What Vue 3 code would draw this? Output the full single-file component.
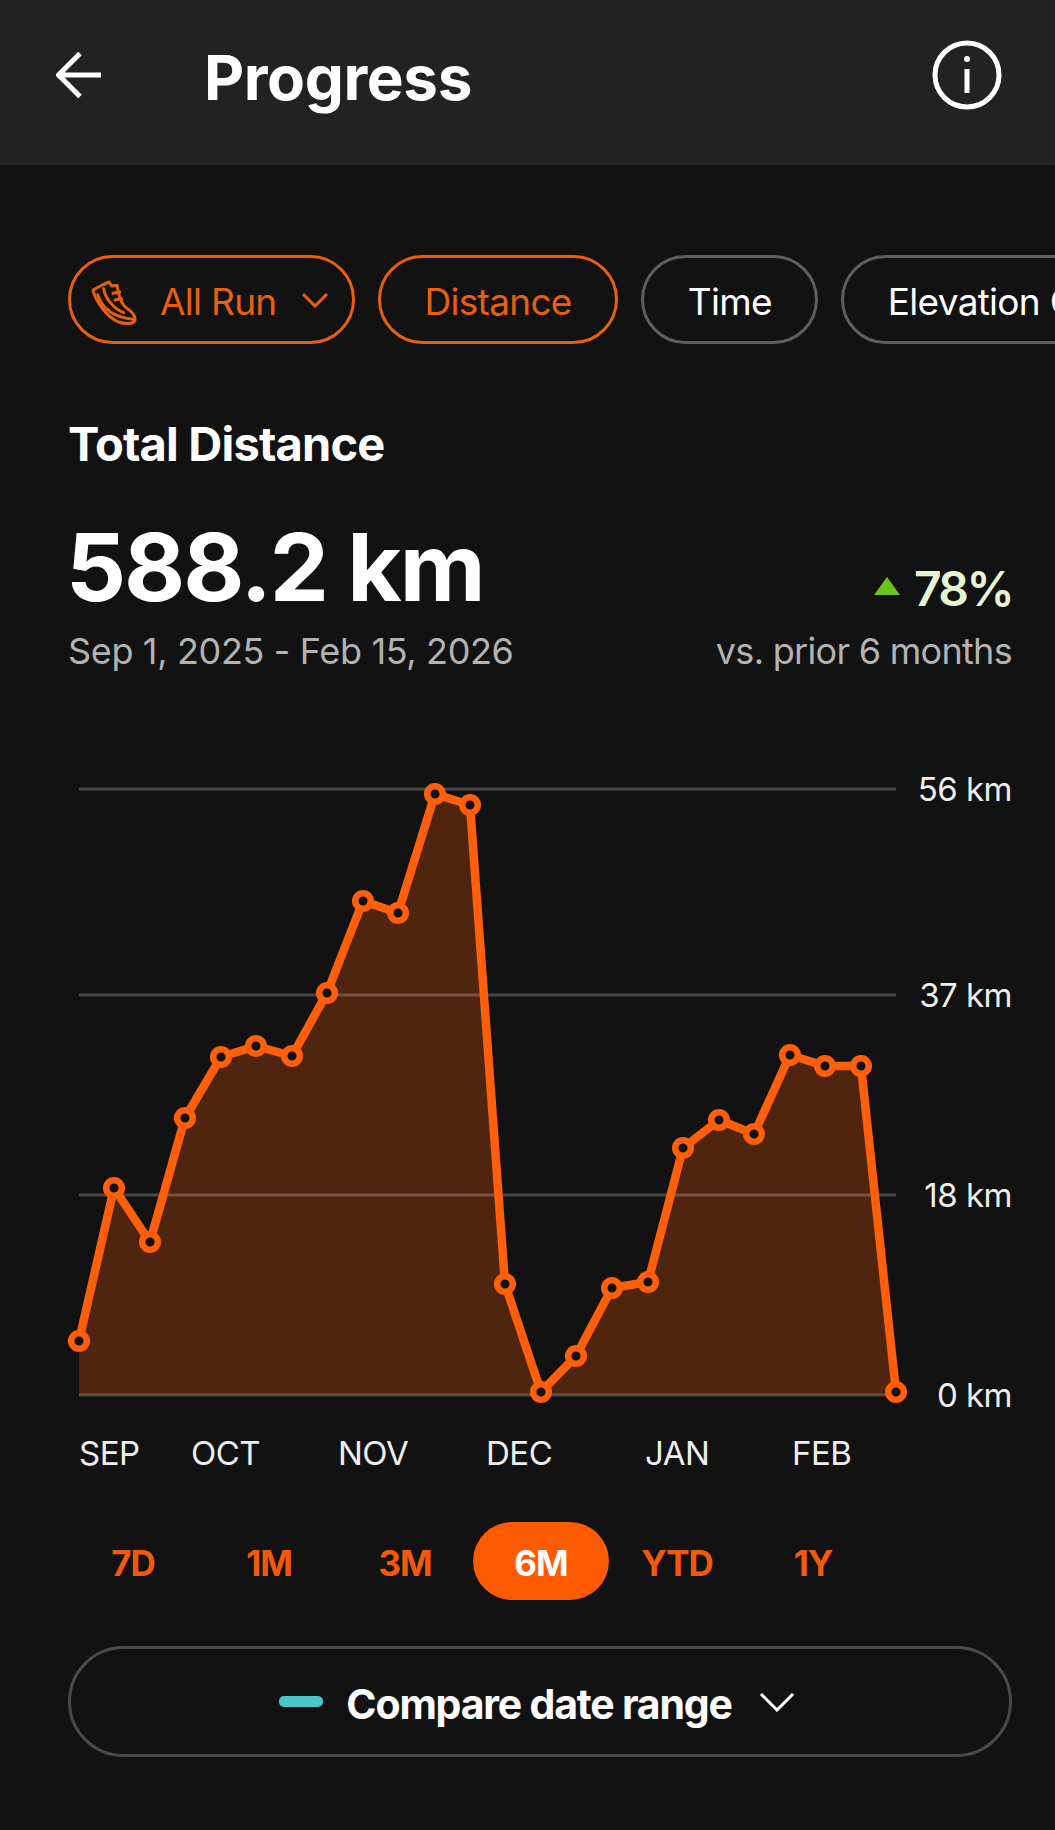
<script setup>
const points = [
  [79,1341],[114,1188],[150,1242],[185,1118],[221,1057],[256,1046],[292,1056],[327,993],[363,901],[398,913],[435,794],[470,805],[505,1284],[541,1392],[576,1356],[612,1288],[648,1282],[683,1148],[719,1120],[754,1134],[790,1055],[825,1066],[861,1066],[896,1392]
]
const line = points.map(p => p.join(',')).join(' ')
const area = `79,1395 ${line} 896,1395`
const grid = [
  { y: 789, label: '56 km' },
  { y: 995, label: '37 km' },
  { y: 1195, label: '18 km' },
  { y: 1395, label: '0 km' }
]
const months = [['SEP',79],['OCT',191],['NOV',338],['DEC',486],['JAN',645],['FEB',792]]
const ranges = ['7D','1M','3M','6M','YTD','1Y']
</script>

<template>
  <div class="page">
    <header class="top">
      <svg class="back" viewBox="0 0 46 46" width="46" height="46" fill="none" stroke="#fff" stroke-width="5">
        <path d="M45 23H3M24 1.5 2.5 23 24 44.5" />
      </svg>
      <h1>Progress</h1>
      <svg class="info" viewBox="0 0 70 70" width="70" height="70" fill="none" stroke="#fff" stroke-width="5">
        <circle cx="35" cy="35" r="32" />
        <path d="M35 29v24" />
        <circle cx="35" cy="19" r="3" fill="#fff" stroke="none" />
      </svg>
    </header>

    <main class="main">
      <div class="pills">
        <div class="pill on first">
          <svg class="shoe" viewBox="0 0 168 156" width="56" height="52" fill="none" stroke="#e8600f" stroke-width="9" stroke-linejoin="round" stroke-linecap="round">
            <path d="M24 48C40 40 60 28 72 24L80 36 96 34C100 60 104 80 118 96C132 110 152 118 150 138C146 152 120 150 100 144C70 130 34 90 24 48Z" />
            <path d="M38 62C50 100 84 130 146 136M56 44C60 70 84 104 116 116M84 58 104 54M90 78 110 74" />
          </svg>
          <span>All Run</span>
          <svg class="chev" viewBox="0 0 28 16" width="28" height="16" fill="none" stroke="#e8600f" stroke-width="3">
            <path d="M2 2 14 14 26 2" />
          </svg>
        </div>
        <div class="pill on">Distance</div>
        <div class="pill">Time</div>
        <div class="pill">Elevation Gain</div>
      </div>

      <h2>Total Distance</h2>
      <div class="stats">
        <div>
          <div class="total">588.2 km</div>
          <div class="sub date">Sep 1, 2025 - Feb 15, 2026</div>
        </div>
        <div class="right">
          <div class="pct"><span class="tri"></span>78%</div>
          <div class="sub">vs. prior 6 months</div>
        </div>
      </div>

      <svg class="chart" viewBox="0 760 1055 750" width="1055" height="750">
        <polygon :points="area" fill="#4f250f" />
        <g v-for="g in grid" :key="g.label">
          <line x1="79" :y1="g.y" x2="896" :y2="g.y" stroke="#fff" stroke-opacity=".22" stroke-width="3" />
          <text class="axis" x="1012" :y="g.y + 12" text-anchor="end">{{ g.label }}</text>
        </g>
        <polyline :points="line" fill="none" stroke="#ff5f0a" stroke-width="8.5" stroke-linejoin="round" />
        <circle v-for="p in points" :key="p[0]" :cx="p[0]" :cy="p[1]" r="7.8" fill="#121212" stroke="#ff5f0a" stroke-width="6.5" />
        <text v-for="m in months" :key="m[0]" class="axis" :x="m[1]" y="1465">{{ m[0] }}</text>
      </svg>

      <div class="ranges">
        <div v-for="r in ranges" :key="r" class="range" :class="{ active: r === '6M' }">{{ r }}</div>
      </div>

      <div class="compare">
        <span class="dash"></span>
        <span class="cmp-text">Compare date range</span>
        <svg viewBox="0 0 36 20" width="36" height="20" fill="none" stroke="#fff" stroke-width="3">
          <path d="M2 2 18 18 34 2" />
        </svg>
      </div>
    </main>
  </div>
</template>

<style scoped>
.page {
  width: 1055px;
  height: 1830px;
  overflow: hidden;
  background: #121212;
  color: #fff;
  font-family: Inter, "Liberation Sans", sans-serif;
}
.top {
  height: 165px;
  background: #222222;
  display: flex;
  align-items: center;
  padding: 0 53px 15px 56px;
  box-sizing: border-box;
}
h1 {
  margin: 4px 0 0 102px;
  font-size: 62px;
  font-weight: 700;
  letter-spacing: -0.4px;
  flex: 1;
}
.main {
  padding: 90px 43px 0 68px;
}
.pills {
  display: flex;
  gap: 23px;
  margin-right: -43px;
  overflow: hidden;
}
.pill {
  height: 89px;
  flex: none;
  box-sizing: border-box;
  border: 3px solid #5e5e5e;
  border-radius: 45px;
  padding: 3px 43.5px 0;
  display: flex;
  align-items: center;
  font-size: 37px;
  letter-spacing: -0.7px;
  color: #fff;
}
.pill.on {
  border-color: #e8600f;
  color: #e8600f;
}
.pill.first {
  padding: 3px 18px 0 14px;
  width: 287px;
}
.pill.first span {
  margin-left: 19px;
  flex: 1;
}
.pill.first .shoe {
  margin-top: -3px;
}
.pill.first .chev {
  margin: -3px 5px 0 0;
}
h2 {
  margin: 76px 0 0;
  font-size: 47px;
  line-height: 48px;
  font-weight: 700;
  letter-spacing: -0.8px;
}
.stats {
  margin-top: 49px;
  display: flex;
  justify-content: space-between;
  align-items: flex-end;
}
.total {
  margin-left: -2px;
  font-size: 94px;
  line-height: 100px;
  font-weight: 700;
  letter-spacing: -2px;
}
.sub {
  margin-top: 12px;
  font-size: 36px;
  line-height: 44px;
  color: #b3b3b3;
  letter-spacing: -0.7px;
}
.date {
  letter-spacing: -0.35px;
}
.right {
  text-align: right;
}
.pct {
  font-size: 48px;
  line-height: 56px;
  font-weight: 600;
  color: #e3f5d3;
  letter-spacing: -2.6px;
  display: flex;
  align-items: center;
  justify-content: flex-end;
}
.tri {
  width: 0;
  height: 0;
  margin-right: 14px;
  margin-top: -6px;
  border-left: 13px solid transparent;
  border-right: 13px solid transparent;
  border-bottom: 18px solid #6cc51d;
}
.chart {
  display: block;
  margin: 87px 0 0 -68px;
}
.axis {
  font-size: 33px;
  fill: #eeeeee;
  font-family: Inter, "Liberation Sans", sans-serif;
  letter-spacing: -0.5px;
}
.ranges {
  margin: 12px 0 0 -3px;
  display: grid;
  grid-template-columns: repeat(6, 136px);
}
.range {
  height: 78px;
  padding-top: 3px;
  box-sizing: border-box;
  display: flex;
  align-items: center;
  justify-content: center;
  font-size: 35px;
  font-weight: 700;
  color: #f2590a;
  border-radius: 39px;
  letter-spacing: -1px;
}
.range.active {
  background: #ff5a00;
  color: #fff;
}
.compare {
  margin-top: 46px;
  height: 111px;
  box-sizing: border-box;
  border: 3px solid #4a4a4a;
  border-radius: 56px;
  padding-right: 6px;
  display: flex;
  align-items: center;
  justify-content: center;
}
.dash {
  width: 44px;
  height: 11px;
  border-radius: 5px;
  background: #4cc5cb;
  margin-right: 23px;
}
.cmp-text {
  font-size: 41px;
  font-weight: 700;
  letter-spacing: -1.2px;
  margin: 4px 27px 0 0;
}
</style>
